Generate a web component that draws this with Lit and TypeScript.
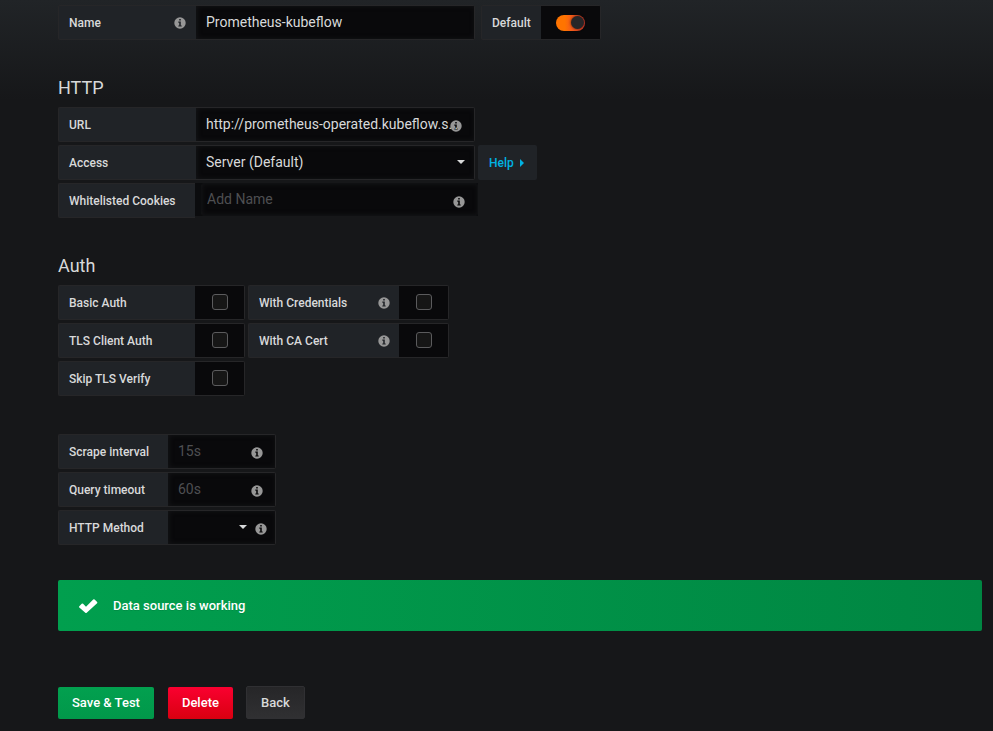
import { LitElement, html, css, svg, nothing } from "lit";
import { customElement } from "lit/decorators.js";

const infoIcon = html`<svg class="info" viewBox="0 0 12 12" role="img" aria-label="More information">
  ${svg`<path fill="currentColor" fill-rule="evenodd" d="M6 .3a5.7 5.7 0 1 0 0 11.4a5.7 5.7 0 0 0 0-11.4zM5.2 2h1.6v1.4H5.2zM4.3 4.6h2.5v3.8h.9v1.1H4.3V8.4h.9V5.7h-.9z"/>`}
</svg>`;

const caret = html`<svg class="caret" viewBox="0 0 8 4" aria-hidden="true"><path fill="currentColor" d="M0 0h8L4 4z"/></svg>`;

@customElement("app-root")
export class AppRoot extends LitElement {
  static styles = css`
    :host {
      display: block;
      box-sizing: border-box;
      min-height: 100vh;
      padding: 5px 11px 12px 58px;
      background: linear-gradient(180deg, #212427 0, #161719 100px);
      color: #d8d9da;
      font-family: Roboto, "Liberation Sans", sans-serif;
      font-size: 14px;
      line-height: 21px;
    }
    * { box-sizing: border-box; }
    input, select, button { font: inherit; color: inherit; margin: 0; }
    h3 {
      margin: 0 0 7px;
      font-size: 18px;
      font-weight: 400;
      line-height: 24px;
    }
    .rows { display: flex; flex-direction: column; gap: 3px; }
    .row { display: flex; height: 35px; gap: 3px; }
    .row.wide { gap: 6px; margin-bottom: 36px; }
    .field { display: flex; height: 35px; }
    .label {
      display: flex;
      align-items: center;
      justify-content: space-between;
      width: 138px;
      padding: 2px 10px 0;
      background: #202327;
      border: 1px solid #262628;
      border-right: 0;
      border-radius: 2px 0 0 2px;
      font-size: 12px;
      font-weight: 500;
      white-space: nowrap;
    }
    .auth .label, .label.cookies { width: 137px; }
    .auth .label.second { width: 151px; padding-right: 9px; }
    .label.short { width: 110px; }
    .label.fit { width: 60px; }
    .info { width: 12px; height: 12px; color: #979797; display: block; flex: none; }
    .label .info { margin-bottom: 2px; }
    .caret { width: 8px; height: 4px; display: block; }
    .control { position: relative; width: 279px; }
    .control.small { width: 108px; }
    .control input, .control select {
      display: block;
      width: 100%;
      height: 35px;
      padding: 0 10px 2px;
      background: #09090b;
      border: 1px solid #262628;
      border-left: 0;
      border-radius: 0 2px 2px 0;
      box-shadow: inset 1px 0 5px #151618;
      outline: 0;
      appearance: none;
      text-overflow: ellipsis;
      font-size: 14px;
    }
    .control select { padding-bottom: 0; }
    .control input::placeholder { color: #4e4f52; opacity: 1; }
    .control .info { position: absolute; right: 13px; top: 13px; }
    .control .caret { position: absolute; right: 10px; top: 15px; }
    .control.method .caret { right: 29px; }
    .control.method .info { right: 9px; }
    .control.tags {
      width: 283px;
      height: 33px;
      padding-left: 6px;
      background: #0b0c0e;
    }
    .control.tags input { height: 33px; padding: 0 6px 2px; border-color: #0f1012; border-radius: 2px; }
    .box {
      display: flex;
      align-items: center;
      justify-content: center;
      width: 50px;
      padding-bottom: 1px;
      background: #09090b;
      border: 1px solid #262628;
      border-left: 0;
      border-radius: 0 2px 2px 0;
    }
    .box.wide { width: 60px; padding-bottom: 0; }
    .check {
      appearance: none;
      width: 16px;
      height: 16px;
      border: 1px solid #5b5b5d;
      border-radius: 3px;
      background: #161616;
    }
    .switch {
      appearance: none;
      display: flex;
      align-items: center;
      justify-content: flex-end;
      width: 29px;
      height: 16px;
      padding: 1px;
      border-radius: 8px;
      background: linear-gradient(90deg, #ff7400 30%, #f55b1a 55%, #d63b2c);
    }
    .switch::before {
      content: "";
      width: 13px;
      height: 13px;
      border-radius: 50%;
      background: #262628;
      box-shadow: 0 0 3px #000000aa;
    }
    .help {
      display: flex;
      align-items: center;
      gap: 6px;
      padding: 1px 13px 0 11px;
      background: #202327;
      color: #00b2e3;
      border: 0;
      border-radius: 2px;
      font-size: 12px;
      font-weight: 500;
    }
    .help svg { width: 4px; height: 8px; }
    .http { margin-bottom: 36px; }
    .auth { margin-bottom: 38px; }
    .timing { margin-bottom: 35px; }
    .alert {
      display: flex;
      align-items: center;
      gap: 14px;
      height: 51px;
      margin-bottom: 55px;
      padding: 0 20px;
      border-radius: 2px;
      background: linear-gradient(90deg, #019f4e, #008642);
      color: #fff;
      font-size: 13px;
      font-weight: 500;
      text-shadow: 0 1px 0 #0000001a;
    }
    .alert svg { width: 21px; height: 16px; }
    .actions { display: flex; gap: 13px; align-items: flex-end; }
    .btn {
      height: 32px;
      padding: 0 14px 1px;
      border: 0;
      border-radius: 2px;
      color: #fff;
      font-size: 13px;
      font-weight: 500;
      line-height: 20px;
      white-space: nowrap;
    }
    .save { margin-right: 1px; background: linear-gradient(180deg, #02a04f, #01984a); }
    .delete { background: linear-gradient(180deg, #fa0030, #d90010); }
    .back {
      height: 33px;
      padding-bottom: 0;
      border: 1px solid #303033;
      background: linear-gradient(180deg, #262628, #303032);
      color: #d8d9da;
    }
  `;

  private toggle(id: string, text: string, info = false) {
    return html`<div class="field">
      <label class="label ${info ? "second" : ""}" for=${id}>${text}${info ? infoIcon : nothing}</label>
      <span class="box"><input class="check" type="checkbox" id=${id} /></span>
    </div>`;
  }

  private timing(id: string, text: string, hint: string) {
    return html`<div class="field">
      <label class="label short" for=${id}>${text}</label>
      <div class="control small"><input type="text" id=${id} placeholder=${hint} />${infoIcon}</div>
    </div>`;
  }

  render() {
    return html`
      <div class="row wide">
        <div class="field">
          <label class="label" for="name">Name ${infoIcon}</label>
          <div class="control"><input id="name" type="text" value="Prometheus-kubeflow" /></div>
        </div>
        <div class="field">
          <label class="label fit" for="default">Default</label>
          <span class="box wide"><input class="switch" type="checkbox" id="default" checked /></span>
        </div>
      </div>

      <section class="http">
        <h3>HTTP</h3>
        <div class="rows">
          <div class="field">
            <label class="label" for="url">URL</label>
            <div class="control"><input id="url" type="text" value="http://prometheus-operated.kubeflow.svc.cluster.local:9090" />${infoIcon}</div>
          </div>
          <div class="row">
            <div class="field">
              <label class="label" for="access">Access</label>
              <div class="control">
                <select id="access"><option>Server (Default)</option></select>${caret}
              </div>
            </div>
            <button class="help" type="button">Help
              <svg viewBox="0 0 4 8" aria-hidden="true"><path fill="currentColor" d="M0 0v8l4-4z"/></svg>
            </button>
          </div>
          <div class="field">
            <label class="label cookies" for="cookies">Whitelisted Cookies</label>
            <div class="control tags"><input id="cookies" type="text" placeholder="Add Name" />${infoIcon}</div>
          </div>
        </div>
      </section>

      <section class="auth">
        <h3>Auth</h3>
        <div class="rows">
          <div class="row">
            ${this.toggle("basic", "Basic Auth")}${this.toggle("credentials", "With Credentials", true)}
          </div>
          <div class="row">
            ${this.toggle("tls", "TLS Client Auth")}${this.toggle("ca", "With CA Cert", true)}
          </div>
          <div class="row">${this.toggle("skip", "Skip TLS Verify")}</div>
        </div>
      </section>

      <section class="timing">
        <div class="rows">
          ${this.timing("scrape", "Scrape interval", "15s")}
          ${this.timing("timeout", "Query timeout", "60s")}
          <div class="field">
            <label class="label short" for="method">HTTP Method</label>
            <div class="control small method">
              <select id="method"><option value=""></option></select>${caret}${infoIcon}
            </div>
          </div>
        </div>
      </section>

      <div class="alert" role="status">
        <svg viewBox="0 0 21 16" aria-hidden="true">
          <path fill="#fff" d="M1.3 8.2 3.7 5.8q.7-.6 1.4 0L8 8.7 15.2 1.5q.7-.6 1.4 0l2.5 2.4q.6.7 0 1.4L8.7 14.7q-.7.6-1.4 0L1.3 9.6q-.6-.7 0-1.4z"/>
        </svg>
        <span>Data source is working</span>
      </div>

      <div class="actions">
        <button class="btn save" type="button">Save &amp; Test</button>
        <button class="btn delete" type="button">Delete</button>
        <button class="btn back" type="button">Back</button>
      </div>
    `;
  }
}
